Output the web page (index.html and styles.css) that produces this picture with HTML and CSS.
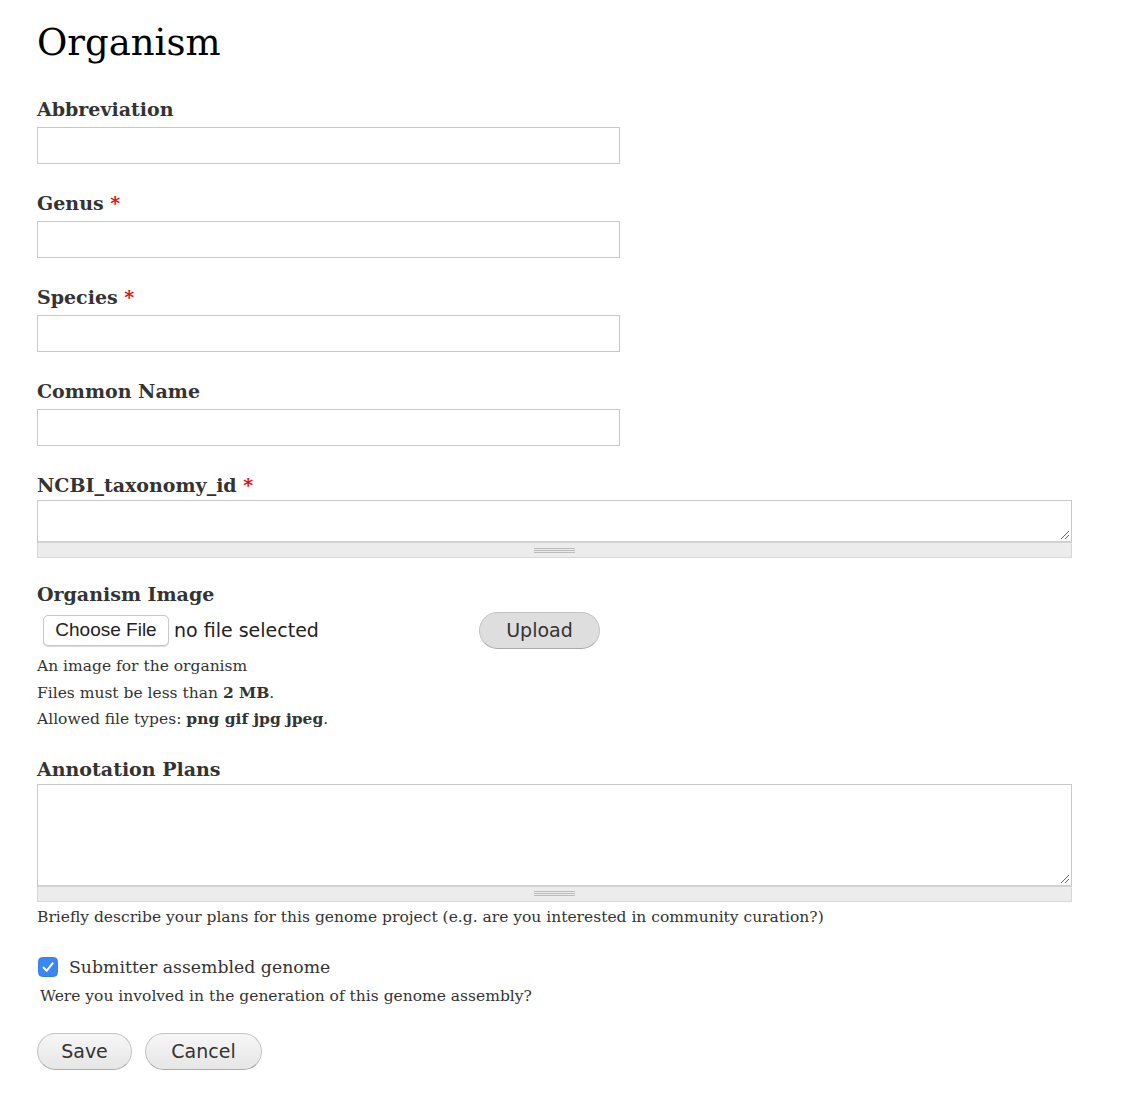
FILE: index.html
```html
<!DOCTYPE html>
<html>
<head>
<meta charset="utf-8">
<link rel="stylesheet" href="styles.css">
</head>
<body>
<div class="page">
  <h1 class="title">Organism</h1>
  <form class="form">
    <div class="field">
      <label class="label">Abbreviation</label>
      <input class="text-input" type="text">
    </div>
    <div class="field">
      <label class="label">Genus <span class="req">*</span></label>
      <input class="text-input" type="text">
    </div>
    <div class="field">
      <label class="label">Species <span class="req">*</span></label>
      <input class="text-input" type="text">
    </div>
    <div class="field">
      <label class="label">Common Name</label>
      <input class="text-input" type="text">
    </div>
    <div class="field field-ncbi">
      <label class="label label-ta">NCBI_taxonomy_id <span class="req">*</span></label>
      <div class="textarea-wrap">
        <div class="textarea small"><span class="resize"></span></div>
        <div class="grippie"><span class="grip"></span></div>
      </div>
    </div>
    <div class="field field-image">
      <label class="label label-img">Organism Image</label>
      <div class="file-row">
        <span class="choose">Choose File</span>
        <span class="nofile">no file selected</span>
        <span class="pill upload">Upload</span>
      </div>
      <div class="desc file-desc">
        <div>An image for the organism</div>
        <div>Files must be less than <strong>2 MB</strong>.</div>
        <div>Allowed file types: <strong>png gif jpg jpeg</strong>.</div>
      </div>
    </div>
    <div class="field field-plans">
      <label class="label label-ta">Annotation Plans</label>
      <div class="textarea-wrap">
        <div class="textarea big"><span class="resize"></span></div>
        <div class="grippie"><span class="grip"></span></div>
      </div>
      <div class="desc plans-desc">Briefly describe your plans for this genome project (e.g. are you interested in community curation?)</div>
    </div>
    <div class="field field-check">
      <div class="check-row">
        <span class="checkbox">
          <svg width="20" height="20" viewBox="0 0 20 20"><rect x="0.5" y="0.5" width="19" height="19" rx="4" fill="#3d86f0" stroke="#3a7fe6"/><path d="M5.5 10.5 L8.6 13.8 L14.6 6.3" fill="none" stroke="#fff" stroke-width="2" stroke-linecap="round" stroke-linejoin="round"/></svg>
        </span>
        <span class="check-label">Submitter assembled genome</span>
      </div>
      <div class="desc check-desc">Were you involved in the generation of this genome assembly?</div>
    </div>
    <div class="actions">
      <span class="pill save">Save</span>
      <span class="pill cancel">Cancel</span>
    </div>
  </form>
</div>
</body>
</html>
```
FILE: styles.css
```css
html, body {
  margin: 0;
  padding: 0;
  background: #fff;
}
.page {
  padding: 0 0 0 37px;
  font-family: Georgia, "DejaVu Serif", serif;
  color: #333;
}
.title {
  margin: 0;
  padding-top: 18px;
  font-family: Georgia, "DejaVu Serif", serif;
  font-weight: normal;
  font-size: 37px;
  line-height: 50px;
  color: #000;
  height: 96px;
  box-sizing: border-box;
}
.form {
  display: flex;
  flex-direction: column;
}
.label {
  display: block;
  font-weight: bold;
  font-size: 19px;
  line-height: 26px;
  color: #333;
  margin-bottom: 5px;
}
.label-ta {
  margin-bottom: 2px;
}
.label-img {
  margin-bottom: 3px;
}
.req {
  color: #e00;
}
.field {
  margin-bottom: 26px;
}
.text-input {
  display: block;
  box-sizing: border-box;
  width: 583px;
  height: 37px;
  border: 1px solid #c9c9c9;
  margin: 0;
  padding: 0;
  background: #fff;
}
.textarea-wrap {
  width: 1035px;
}
.textarea {
  box-sizing: border-box;
  border: 1px solid #c9c9c9;
  border-bottom: 2px solid #d2d2d2;
  position: relative;
  background: #fff;
}
.textarea.small { height: 43px; }
.textarea.big { height: 103px; }
.resize {
  position: absolute;
  right: 2px;
  bottom: 2px;
  width: 8px;
  height: 8px;
  background: linear-gradient(135deg, transparent 45%, #666 46%, #666 52%, transparent 53%, transparent 70%, #666 71%, #666 77%, transparent 78%);
}
.grippie {
  box-sizing: border-box;
  height: 15px;
  background: #ececec;
  border: 1px solid #d8d8d8;
  border-top: none;
  display: flex;
  justify-content: center;
  align-items: center;
}
.grip {
  width: 41px;
  height: 5px;
  border-top: 1px solid #bbb;
  border-bottom: 1px solid #bbb;
  background: linear-gradient(#ececec 0, #ececec 1px, #bbb 1px, #bbb 2px, #ececec 2px);
  box-sizing: border-box;
}
.field-ncbi {
  margin-bottom: 23px;
}
.field-image {
  margin-bottom: 23px;
}
.file-row {
  display: flex;
  align-items: center;
  height: 40px;
  font-family: "DejaVu Sans", sans-serif;
}
.choose {
  margin-left: 6px;
  box-sizing: border-box;
  height: 31px;
  width: 126px;
  border: 1px solid #c8c8c8;
  border-radius: 5px;
  box-shadow: 0 1px 1px rgba(0,0,0,0.15);
  background: #fff;
  display: flex;
  align-items: center;
  justify-content: center;
  font-family: "Liberation Sans", Arial, sans-serif;
  font-size: 19px;
  color: #222;
}
.nofile {
  margin-left: 5px;
  font-size: 19px;
  color: #222;
  width: 305px;
}
.pill {
  box-sizing: border-box;
  height: 37px;
  border-radius: 19px;
  border: 1px solid #c4c4c4;
  border-bottom-color: #aaa;
  background: linear-gradient(#f6f6f6, #e6e6e6);
  display: inline-flex;
  align-items: center;
  justify-content: center;
  font-family: "DejaVu Sans", sans-serif;
  font-size: 19px;
  color: #333;
}
.upload {
  width: 121px;
  background: #dedede;
}
.desc {
  font-size: 15.5px;
  line-height: 26px;
  color: #333;
}
.file-desc {
  margin-top: 3px;
  line-height: 26.5px;
}
.desc strong {
  font-weight: bold;
}
.field-plans {
  margin-bottom: 22px;
}
.plans-desc {
  margin-top: 2px;
}
.field-check {
  margin-bottom: 24px;
}
.check-row {
  display: flex;
  align-items: center;
  height: 30px;
}
.checkbox {
  margin-left: 1px;
  width: 20px;
  height: 20px;
  display: inline-flex;
}
.check-label {
  margin-left: 11px;
  font-size: 17.3px;
  color: #333;
}
.check-desc {
  margin-top: 1px;
  margin-left: 3px;
}
.actions {
  display: flex;
  gap: 13px;
}
.save { width: 95px; }
.cancel { width: 117px; }
```
